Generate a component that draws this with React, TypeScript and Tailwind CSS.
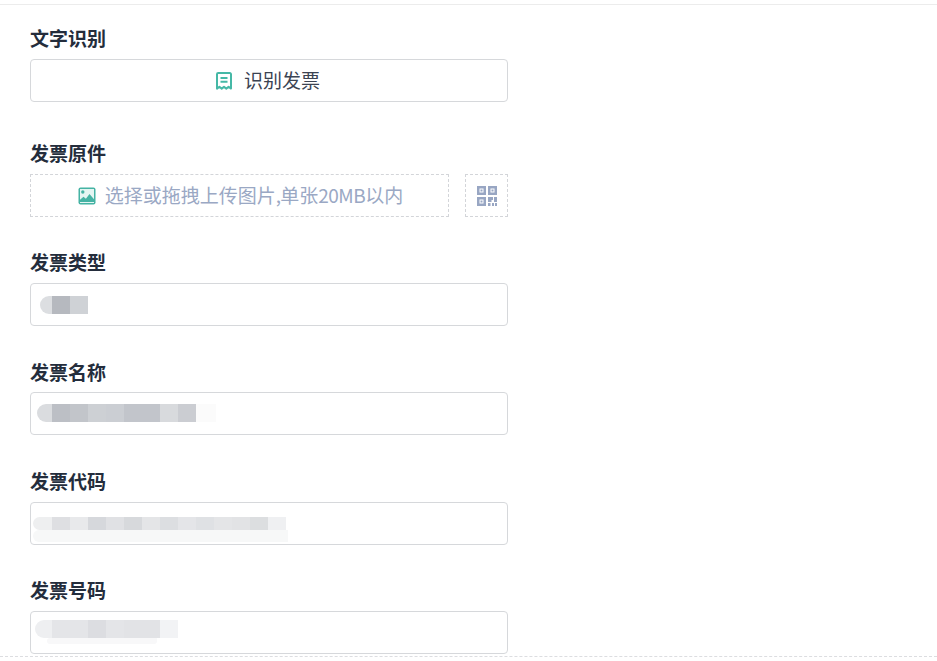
const font = '[font-family:"Noto_Sans_CJK_SC","Noto_Sans",sans-serif]';

type Cell = { w: string; bg: string };

function Label({ text, mb = "mb-[9px]" }: { text: string; mb?: string }) {
  return <div className={`h-6 text-[19px] leading-6 font-bold text-[#242d3c] ${mb}`}>{text}</div>;
}

function Mosaic({ cells, className }: { cells: Cell[]; className: string }) {
  return (
    <div className={`flex ${className}`}>
      {cells.map((c, i) => (
        <div key={i} className={`h-full ${c.w} ${c.bg} ${i === 0 ? "rounded-l-full" : ""}`} />
      ))}
    </div>
  );
}

function BlurInput({ label, pad, top, mb, rows }: { label: string; pad: string; top: string; mb?: string; rows: { cells: Cell[]; h: string }[] }) {
  return (
    <div>
      <Label text={label} mb={mb} />
      <div className={`h-[43px] w-[478px] rounded border border-[#d6d8db] bg-white ${pad} ${top}`}>
        {rows.map((r, i) => (
          <Mosaic key={i} cells={r.cells} className={r.h} />
        ))}
      </div>
    </div>
  );
}

function ReceiptIcon() {
  return (
    <svg width="16" height="18" viewBox="0 0 16 18" fill="none" stroke="#45b8a6" strokeWidth="2">
      <path d="M1 16.6V2.2a1.2 1.2 0 0 1 1.2-1.2h11.6A1.2 1.2 0 0 1 15 2.2v14.4l-2.4-1.8-2.3 1.8L8 14.8l-2.3 1.8-2.3-1.8z" strokeLinejoin="round" />
      <path d="M4.5 6h7M4.5 9.8h7" />
    </svg>
  );
}

function ImageIcon() {
  return (
    <svg width="18" height="18" viewBox="0 0 18 18">
      <rect x="0.5" y="0.5" width="17" height="17" rx="2" fill="#45b3a4" />
      <rect x="2" y="2" width="14" height="14" fill="#e4f5f2" />
      <circle cx="4.8" cy="5" r="1.7" fill="#45b3a4" />
      <path d="M2 15v-2.2l3.5-3 2.4 2 3.6-4.8 4.5 5.2V15z" fill="#45b3a4" />
    </svg>
  );
}

function QrIcon() {
  return (
    <svg width="20" height="20" viewBox="0 0 20 20" fill="#98a6c3">
      <path fillRule="evenodd" d="M0 0h9v9H0zM2.500 2.500v4h4v-4zM11 0h9v9h-9zM13.500 2.500v4h4v-4zM0 11h9v9H0zM2.500 13.500v4h4v-4z" />
      <path d="M3.500 3.500h2v2h-2zM14.500 3.500h2v2h-2zM3.500 14.500h2v2h-2zM11 11h5v3h-1.500v2H11zM17 11h3v5h-3zM11 17h2.500v3H11zM15 17h2v3h-2zM18 17h2v3h-2z" />
    </svg>
  );
}

const typeCells: Cell[] = [
  { w: "w-3", bg: "bg-[#dcdee1]" },
  { w: "w-[18px]", bg: "bg-[#b6b9bf]" },
  { w: "w-[18px]", bg: "bg-[#cfd2d6]" },
];

const nameCells: Cell[] = [
  { w: "w-[15px]", bg: "bg-[#dadcdf]" },
  { w: "w-[18px]", bg: "bg-[#bcbfc5]" },
  { w: "w-[18px]", bg: "bg-[#c2c5ca]" },
  { w: "w-[18px]", bg: "bg-[#cdd0d4]" },
  { w: "w-[18px]", bg: "bg-[#cbced3]" },
  { w: "w-9", bg: "bg-[#c2c5cb]" },
  { w: "w-[18px]", bg: "bg-[#d8dadd]" },
  { w: "w-[18px]", bg: "bg-[#cbcdd2]" },
  { w: "w-5", bg: "bg-[#fbfbfb]" },
];

const codeCells: Cell[] = [
  { w: "w-[19px]", bg: "bg-[#eeeff0]" },
  { w: "w-[18px]", bg: "bg-[#dedfe2]" },
  { w: "w-[18px]", bg: "bg-[#e8e9eb]" },
  { w: "w-[18px]", bg: "bg-[#d6d8dc]" },
  { w: "w-[18px]", bg: "bg-[#e0e1e4]" },
  { w: "w-[18px]", bg: "bg-[#d7d9dc]" },
  { w: "w-[18px]", bg: "bg-[#e4e5e7]" },
  { w: "w-[18px]", bg: "bg-[#dcdee1]" },
  { w: "w-[18px]", bg: "bg-[#e4e5e8]" },
  { w: "w-[18px]", bg: "bg-[#dfe1e4]" },
  { w: "w-[18px]", bg: "bg-[#e4e5e7]" },
  { w: "w-[18px]", bg: "bg-[#e2e3e5]" },
  { w: "w-[18px]", bg: "bg-[#dcdee0]" },
  { w: "w-[18px]", bg: "bg-[#eff0f2]" },
];

const codeShadow: Cell[] = [{ w: "w-[255px] rounded-br-xl", bg: "bg-[#f7f8f8]" }];

const numberCells: Cell[] = [
  { w: "w-[17px]", bg: "bg-[#eeeff1]" },
  { w: "w-9", bg: "bg-[#e4e5e8]" },
  { w: "w-[18px]", bg: "bg-[#dcdde1]" },
  { w: "w-[18px]", bg: "bg-[#e4e5e8]" },
  { w: "w-9", bg: "bg-[#e2e3e6]" },
  { w: "w-[18px]", bg: "bg-[#f2f3f5]" },
];

const numberShadow: Cell[] = [{ w: "w-[110px] ml-3 rounded-b-full", bg: "bg-[#f8f8f9]" }];

export default function App() {
  return (
    <div className={`h-[661px] w-[937px] overflow-hidden bg-white ${font}`}>
      <div className="h-[5px] border-b border-[#ececec]" />
      <div className="pl-[30px] pt-[21px]">
        {/* 文字识别 */}
        <Label text="文字识别" />
        <button className="flex h-[43px] w-[478px] items-center justify-center gap-3 rounded border border-[#d6d8db] pr-0.5 text-[19px] text-[#3b4352]">
          <ReceiptIcon />
          识别发票
        </button>

        {/* 发票原件 */}
        <div className="mt-[39px]">
          <Label text="发票原件" />
          <div className="flex w-[478px] justify-between">
            <div className="flex h-[43px] w-[419px] items-center justify-center gap-[9px] border border-dashed border-[#d3d5d9] pl-0.5 text-[19px] text-[#9aa8c4]">
              <ImageIcon />
              <span>
                选择或拖拽上传图片<span className="tracking-[-1px]">,</span>单张<span className="tracking-[-0.5px]">20MB</span>以内
              </span>
            </div>
            <div className="flex h-[43px] w-[43px] items-center justify-center border border-dashed border-[#d3d5d9]">
              <QrIcon />
            </div>
          </div>
        </div>

        <div className="mt-[33px] flex flex-col gap-[34px]">
          <BlurInput label="发票类型" pad="pl-[9px]" top="pt-3" rows={[{ cells: typeCells, h: "h-[18px]" }]} />
          <BlurInput label="发票名称" mb="mb-2" pad="pl-1.5" top="pt-[11px]" rows={[{ cells: nameCells, h: "h-[18px]" }]} />
          <BlurInput
            label="发票代码"
            pad="pl-0.5"
            top="pt-3.5"
            rows={[
              { cells: codeCells, h: "h-[13px]" },
              { cells: codeShadow, h: "h-3" },
            ]}
          />
          <div className="-mt-px">
            <BlurInput
              label="发票号码"
              pad="pl-1"
              top="pt-2"
              rows={[
                { cells: numberCells, h: "h-[18px]" },
                { cells: numberShadow, h: "h-1.5" },
              ]}
            />
          </div>
        </div>
      </div>
      <div className="mt-0.5 border-b border-dashed border-[#dcdde0]" />
    </div>
  );
}
